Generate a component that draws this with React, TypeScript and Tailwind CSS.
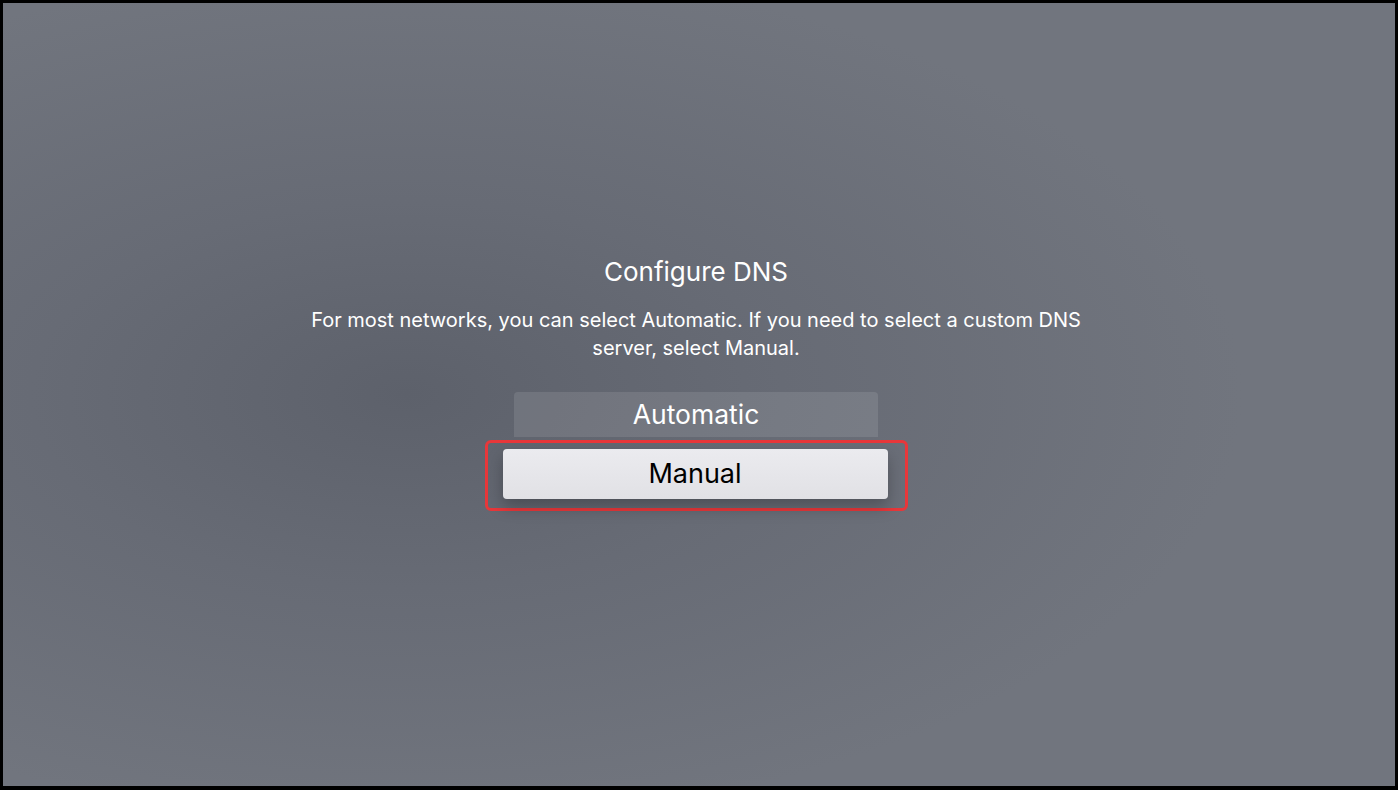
const App = () => {
  return (
    <div className="w-[1398px] h-[790px] bg-black pt-[3px] pl-[3px] pr-[3px] pb-[4px]">
      <div
        className="w-full h-full flex flex-col items-center pt-[255px] pr-[6px] bg-[radial-gradient(ellipse_60%_55%_at_29%_50%,#5d616b_0%,#676b75_45%,#71757e_100%)]"
        style={{ fontFamily: "Inter, 'Noto Sans', sans-serif" }}
      >
        <h1 className="text-[26px] leading-[28px] text-white">Configure DNS</h1>
        <p className="mt-[20px] w-[800px] text-center text-[20px] leading-[28px] text-white">
          For most networks, you can select Automatic. If you need to select a custom DNS server, select Manual.
        </p>
        <div className="mt-[30px] w-[364px] h-[45px] rounded-t-[4px] bg-white/10 flex items-center justify-center">
          <span className="text-[26.5px] text-white">Automatic</span>
        </div>
        <div className="mt-[3px] border-[3px] border-[#e8373a] rounded-[6px] pt-[6px] pb-[9px] pl-[15px] pr-[17px]">
          <div className="w-[385px] h-[50px] rounded-[4px] bg-[linear-gradient(#ebebef,#e1e1e5)] shadow-[0_8px_16px_rgba(0,0,0,0.25)] flex items-center justify-center">
            <span className="text-[27px] text-black">Manual</span>
          </div>
        </div>
      </div>
    </div>
  );
};

export default App;
